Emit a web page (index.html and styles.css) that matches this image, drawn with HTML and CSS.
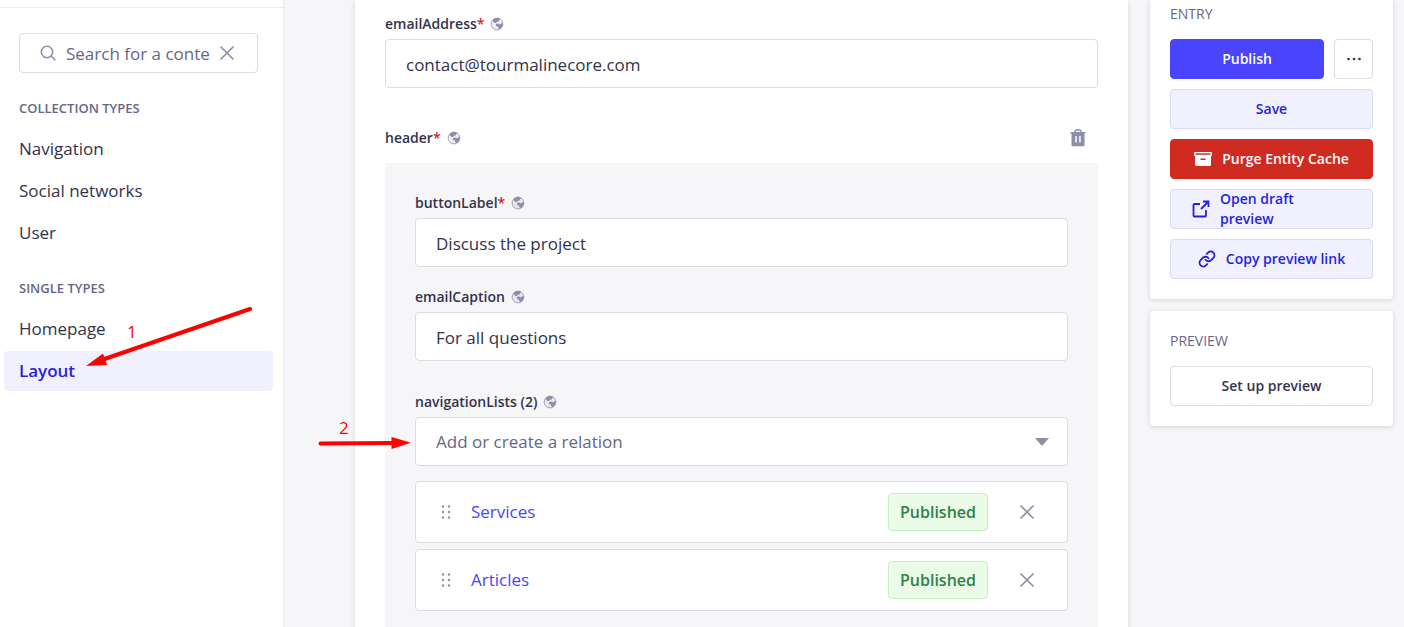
FILE: index.html
```html
<!DOCTYPE html>
<html lang="en">
<head>
<meta charset="utf-8">
<title>Layout - Content Manager</title>
<link rel="stylesheet" href="styles.css">
</head>
<body>
<svg class="defs" aria-hidden="true">
  <symbol id="globe" viewBox="0 0 14 14">
    <circle cx="7" cy="7" r="5.900" fill="#c9c9d8" fill-opacity=".35" stroke="#a5a5ba" stroke-width="1"/>
    <path fill="#8e8ea9" d="M2.200 3.600Q4.500 .6 8 .9L10.300 1.900L9 3.200L8.600 4.400L6.800 4.700L6 6L4.800 6.100L3.600 5.200Z"/>
    <path fill="#8e8ea9" d="M5.800 7.100L8 6.600L9.800 7.600L11 6.300L12.900 6.500Q12.900 10.300 9.600 12.300L8.300 11.300L8 9.800L6.200 9Z"/>
  </symbol>
  <symbol id="cross" viewBox="0 0 14 14"><path d="M1 1l12 12M13 1L1 13" fill="none" stroke="#8e8ea9" stroke-width="1.700" stroke-linecap="round"/></symbol>
  <symbol id="grip" viewBox="0 0 10 14"><g fill="#8e8ea9"><circle cx="2" cy="1.500" r="1.200"/><circle cx="8" cy="1.500" r="1.200"/><circle cx="2" cy="7" r="1.200"/><circle cx="8" cy="7" r="1.200"/><circle cx="2" cy="12.500" r="1.200"/><circle cx="8" cy="12.500" r="1.200"/></g></symbol>
</svg>
<div class="app">
  <nav class="sidebar" aria-label="Content types">
    <div class="search">
      <svg width="16" height="16" viewBox="0 0 16 16" fill="none" stroke="#8e8ea9" stroke-width="1.600" stroke-linecap="round"><circle cx="7" cy="7" r="5.700"/><path d="M11.200 11.200L14.800 14.800"/></svg>
      <input class="search-input" type="text" aria-label="Search for a content type" placeholder="Search for a conte">
      <button class="icon-button" type="button" aria-label="Clear"><svg width="14" height="14"><use href="#cross"/></svg></button>
    </div>
    <h2 class="group-title">COLLECTION TYPES</h2>
    <ul class="links">
      <li><a class="link" href="#navigation">Navigation</a></li>
      <li><a class="link" href="#social">Social networks</a></li>
      <li><a class="link" href="#user">User</a></li>
    </ul>
    <h2 class="group-title">SINGLE TYPES</h2>
    <ul class="links">
      <li><a class="link" href="#homepage">Homepage</a></li>
      <li><a class="link active" href="#layout">Layout</a></li>
    </ul>
  </nav>

  <div class="content">
    <main class="form-card">
      <div class="field">
        <div class="label-row"><label for="email">emailAddress<span class="required">*</span></label><svg class="globe"><use href="#globe"/></svg></div>
        <input class="input" id="email" type="text" value="contact@tourmalinecore.com">
      </div>
      <div class="header-row">
        <div class="label-row"><span>header<span class="required">*</span></span><svg class="globe"><use href="#globe"/></svg></div>
        <button class="icon-button" type="button" aria-label="Delete header">
          <svg width="16" height="18" viewBox="0 0 16 18"><path d="M5 3V2.500Q5 1 6.500 1h3Q11 1 11 2.500V3" fill="none" stroke="#8e8ea9" stroke-width="1.400"/><path fill="#8e8ea9" fill-rule="evenodd" d="M.5 3h15v1.500H14.500V16Q14.500 17.300 13.200 17.300H2.800Q1.500 17.300 1.500 16V4.500H.5ZM5.300 7v6.500h1.500V7ZM9.200 7v6.500h1.500V7Z"/></svg>
        </button>
      </div>
      <section class="panel">
        <div class="field">
          <div class="label-row"><label for="button-label">buttonLabel<span class="required">*</span></label><svg class="globe"><use href="#globe"/></svg></div>
          <input class="input" id="button-label" type="text" value="Discuss the project">
        </div>
        <div class="field caption">
          <div class="label-row"><label for="caption">emailCaption</label><svg class="globe"><use href="#globe"/></svg></div>
          <input class="input" id="caption" type="text" value="For all questions">
        </div>
        <div class="field relation">
          <div class="label-row"><label for="lists">navigationLists (2)</label><svg class="globe"><use href="#globe"/></svg></div>
          <div class="select-wrap">
            <select class="input select" id="lists"><option>Add or create a relation</option></select>
            <svg class="caret" width="14" height="8" viewBox="0 0 14 8"><path d="M0 0h14L7 8Z" fill="#8e8ea9"/></svg>
          </div>
        </div>
        <ul class="relations">
          <li class="item">
            <button class="icon-button" type="button" aria-label="Drag Services"><svg width="10" height="14"><use href="#grip"/></svg></button>
            <a class="item-link" href="#services">Services</a>
            <span class="badge">Published</span>
            <button class="icon-button" type="button" aria-label="Remove Services"><svg width="14" height="14"><use href="#cross"/></svg></button>
          </li>
          <li class="item">
            <button class="icon-button" type="button" aria-label="Drag Articles"><svg width="10" height="14"><use href="#grip"/></svg></button>
            <a class="item-link" href="#articles">Articles</a>
            <span class="badge">Published</span>
            <button class="icon-button" type="button" aria-label="Remove Articles"><svg width="14" height="14"><use href="#cross"/></svg></button>
          </li>
        </ul>
      </section>
    </main>

    <aside class="side">
      <section class="side-card entry">
        <h2 class="side-title">ENTRY</h2>
        <div class="actions">
          <div class="publish-row">
            <button class="button primary" type="button">Publish</button>
            <button class="button more" type="button" aria-label="More actions"><svg width="14" height="4" viewBox="0 0 14 4" fill="#32324d"><circle cx="1.500" cy="2" r="1.300"/><circle cx="7" cy="2" r="1.300"/><circle cx="12.500" cy="2" r="1.300"/></svg></button>
          </div>
          <button class="button secondary" type="button">Save</button>
          <button class="button danger" type="button"><svg width="18" height="14" viewBox="0 0 18 14"><path fill="#fff" fill-rule="evenodd" d="M1 0h16q1 0 1 1v2q0 1-1 1v8.500q0 1.500-1.500 1.500h-13Q1 14 1 12.500V4Q0 4 0 3V1Q0 0 1 0ZM1.500 1.300v1.400h15V1.300ZM6.500 6.600V8h5V6.600Z"/></svg>Purge Entity Cache</button>
          <button class="button secondary wrapped" type="button"><svg width="18" height="18" viewBox="0 0 18 18" fill="none" stroke="#271fe0" stroke-width="1.800"><path d="M8 4H2.500Q1.500 4 1.500 5v10.500q0 1 1 1H13q1 0 1-1V10M11 1.500h5.500V7M16.500 1.500L9 9"/></svg><span>Open draft<br>preview</span></button>
          <button class="button secondary" type="button"><svg width="18" height="18" viewBox="0 0 24 24" fill="none" stroke="#271fe0" stroke-width="2.500" stroke-linecap="round"><path d="M10 13a5 5 0 0 0 7.540.54l3-3a5 5 0 0 0-7.070-7.070l-1.720 1.710M14 11a5 5 0 0 0-7.540-.54l-3 3a5 5 0 0 0 7.070 7.070l1.710-1.710"/></svg>Copy preview link</button>
        </div>
      </section>
      <section class="side-card">
        <h2 class="side-title">PREVIEW</h2>
        <div class="actions"><button class="button" type="button">Set up preview</button></div>
      </section>
    </aside>
  </div>
</div>
<svg class="annotations" width="420" height="460" viewBox="0 0 420 460">
  <g stroke="#f00" stroke-width="4" stroke-linecap="round"><path d="M250 309L103 359.500M320.500 443.500L392 443"/></g>
  <g fill="#f00"><path d="M86 366L103 353.500L107 365ZM411 442.700L391.500 437V449Z"/><text x="127" y="338">1</text><text x="339" y="434">2</text></g>
</svg>
</body>
</html>
```
FILE: styles.css
```css
* { box-sizing: border-box; }
body {
  margin: 0;
  color: #32324d;
  background: #f6f6f9;
  font: 400 17px/24px "Open Sans", "Noto Sans", sans-serif;
  height: 100vh;
  overflow: hidden;
  position: relative;
}
.defs { display: none; }
svg { display: block; flex: none; }
button, input, select { font: inherit; color: inherit; margin: 0; }
h2 { margin: 0; font-size: 13px; line-height: 20px; color: #666687; }
ul { list-style: none; margin: 0; padding: 0; }
a { color: inherit; text-decoration: none; }
.app { display: flex; min-height: 100vh; }

.sidebar {
  flex: none;
  width: 284px;
  padding-top: 7px;
  background: #fff;
  border-right: 1px solid #eaeaef;
}
.search {
  display: flex;
  align-items: center;
  gap: 8px;
  height: 40px;
  margin: 0 25px 0 19px;
  padding: 0 23px 0 20px;
  border: 1px solid #dcdce4;
  border-radius: 4px;
}
.sidebar::before {
  content: "";
  display: block;
  height: 1px;
  margin-bottom: 25px;
  background: #eaeaef;
}
.search-input {
  flex: 1;
  min-width: 0;
  padding: 1px 0 0 2px;
  border: 0;
  outline: 0;
  background: none;
}
.search-input::placeholder { color: #666687; opacity: 1; }
.icon-button { padding: 0; border: 0; background: none; cursor: pointer; }
.group-title { margin: 25px 19px 11px; font-weight: 600; }
.links { display: grid; gap: 2px; padding: 0 10px 0 4px; }
.link { display: block; padding: 8px 15px; border-radius: 4px; }
.active { color: #271fe0; background: #f0f0ff; font-weight: 600; }

.content {
  flex: 1;
  display: flex;
  align-items: flex-start;
  gap: 22px;
  padding: 0 11px 0 71px;
}
.form-card {
  flex: 1;
  min-height: 100vh;
  padding: 14px 30px 0;
  background: #fff;
  box-shadow: 0 1px 5px rgba(33, 33, 52, .15);
}
.field { display: grid; gap: 5px; }
.label-row {
  display: flex;
  align-items: center;
  gap: 6px;
  font-size: 14px;
  line-height: 20px;
  font-weight: 600;
}
.required { color: #d02b20; }
.globe { width: 14px; height: 14px; }
.input {
  width: 100%;
  height: 49px;
  padding: 1px 20px 0;
  background: #fff;
  border: 1px solid #dcdce4;
  border-radius: 4px;
}
.header-row {
  display: flex;
  align-items: center;
  justify-content: space-between;
  margin: 40px 12px 15px 0;
}
.panel { padding: 30px; background: #f6f6f9; }
.caption { margin-top: 20px; }
.relation { margin-top: 31px; }
.select-wrap { display: grid; align-items: center; }
.select { grid-area: 1 / 1; appearance: none; color: #666687; }
.caret { grid-area: 1 / 1; justify-self: end; margin-right: 19px; pointer-events: none; }
.relations { display: grid; gap: 6px; margin-top: 15px; }
.item {
  display: flex;
  align-items: center;
  height: 62px;
  padding: 0 33px 0 25px;
  background: #fff;
  border: 1px solid #dcdce4;
  border-radius: 4px;
}
.item-link { flex: 1; margin-left: 20px; color: #4945ff; }
.badge {
  margin-right: 32px;
  padding: 6px 11px;
  color: #328048;
  background: #eafbe7;
  border: 1px solid #c6f0c2;
  border-radius: 4px;
  font-size: 16px;
  font-weight: 600;
}

.side { flex: none; width: 243px; display: grid; gap: 12px; }
.side-card {
  padding: 20px;
  background: #fff;
  border-radius: 4px;
  box-shadow: 0 1px 5px rgba(33, 33, 52, .15);
}
.entry { padding-top: 4px; border-radius: 0 0 4px 4px; }
.side-title { font-size: 14px; font-weight: 400; }
.actions { display: grid; gap: 10px; margin-top: 15px; }
.publish-row { display: flex; gap: 10px; }
.button {
  display: flex;
  align-items: center;
  justify-content: center;
  gap: 10px;
  height: 40px;
  padding: 0 16px;
  background: #fff;
  border: 1px solid #dcdce4;
  border-radius: 4px;
  font-size: 14px;
  line-height: 20px;
  font-weight: 600;
  white-space: nowrap;
}
.primary { flex: 1; color: #fff; background: #4945ff; border-color: #4945ff; }
.more { width: 39px; padding: 0; }
.secondary { color: #271fe0; background: #f0f0ff; border-color: #d9d8ff; }
.danger { color: #fff; background: #d02b20; border-color: #d02b20; }
.wrapped { justify-content: flex-start; padding: 0 21px; text-align: left; }
.annotations { position: absolute; top: 0; left: 0; pointer-events: none; }
```
